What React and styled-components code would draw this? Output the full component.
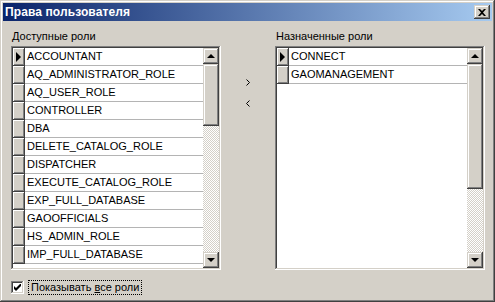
import React from "react";
import styled, { createGlobalStyle } from "styled-components";

const GlobalStyle = createGlobalStyle`
  html, body { margin: 0; padding: 0; background: #d4d0c8; }
  body { font-family: "Liberation Sans", Arial, sans-serif; font-size: 11px; color: #000; }
`;

const raised = `
  box-shadow: inset -1px -1px #404040, inset 1px 1px #d4d0c8,
    inset -2px -2px #808080, inset 2px 2px #ffffff;
`;
const sunken = `
  box-shadow: inset -1px -1px #ffffff, inset 1px 1px #808080,
    inset -2px -2px #d4d0c8, inset 2px 2px #404040;
`;

const Window = styled.div`
  box-sizing: border-box;
  width: 495px;
  height: 302px;
  padding: 3px;
  background: #d4d0c8;
  display: flex;
  flex-direction: column;
  box-shadow: inset -1px -1px #404040, inset 1px 1px #d4d0c8,
    inset -2px -2px #808080, inset 2px 2px #ffffff;
`;

const TitleBar = styled.div`
  height: 18px;
  display: flex;
  align-items: center;
  justify-content: space-between;
  padding: 0 2px;
  background: linear-gradient(to right, #0a246a, #a6caf0);
`;

const Title = styled.span`
  color: #fff;
  font-weight: bold;
  font-size: 12px;
  letter-spacing: 0.1px;
`;

const CloseButton = styled.div`
  box-sizing: border-box;
  width: 16px;
  height: 14px;
  background: #d4d0c8;
  display: flex;
  align-items: center;
  justify-content: center;
  ${raised}
`;

const Body = styled.div`
  flex: 1;
  display: flex;
  flex-direction: column;
  padding: 9px 7px 0 8px;
`;

const Columns = styled.div`
  display: grid;
  grid-template-columns: 210px 54px 210px;
`;

const Group = styled.div`
  display: flex;
  flex-direction: column;
`;

const Label = styled.div`
  line-height: 13px;
  margin-bottom: 3px;
  padding-left: 1px;
`;

const ListBox = styled.div`
  box-sizing: border-box;
  height: 224px;
  padding: 2px;
  background: #fff;
  display: flex;
  ${sunken}
`;

const Rows = styled.div`
  flex: 1;
  display: flex;
  flex-direction: column;
`;

const Row = styled.div`
  height: 18px;
  display: flex;
  flex-shrink: 0;
`;

const Indicator = styled.div`
  box-sizing: border-box;
  width: 12px;
  height: 18px;
  background: #d4d0c8;
  display: flex;
  align-items: center;
  padding-left: 3px;
  box-shadow: inset -1px -1px #404040, inset 1px 1px #ffffff,
    inset -2px -2px #808080;
  &::after {
    content: "";
    display: ${(p) => (p.$current ? "block" : "none")};
    width: 0;
    height: 0;
    border-top: 5px solid transparent;
    border-bottom: 5px solid transparent;
    border-left: 5px solid #000;
  }
`;

const Cell = styled.div`
  flex: 1;
  box-sizing: border-box;
  border-bottom: 1px solid #b4b4b4;
  padding-left: 2px;
  line-height: 17px;
  white-space: nowrap;
  overflow: hidden;
`;

const ScrollBar = styled.div`
  width: 16px;
  display: flex;
  flex-direction: column;
`;

const ScrollButton = styled.div`
  box-sizing: border-box;
  width: 16px;
  height: 16px;
  flex-shrink: 0;
  background: #d4d0c8;
  display: flex;
  align-items: center;
  justify-content: center;
  ${raised}
  &::after {
    content: "";
    width: 0;
    height: 0;
    border-left: 4px solid transparent;
    border-right: 4px solid transparent;
    ${(p) =>
      p.$down ? "border-top: 4px solid #000;" : "border-bottom: 4px solid #000;"}
  }
`;

const Thumb = styled.div`
  box-sizing: border-box;
  flex-shrink: 0;
  background: #d4d0c8;
  ${raised}
`;

const Track = styled.div`
  flex: 1;
  background: repeating-conic-gradient(#d4d0c8 0 25%, #ffffff 0 50%) 0 0 / 2px 2px;
`;

const Middle = styled.div`
  display: flex;
  flex-direction: column;
  align-items: center;
  padding-top: 42px;
  gap: 1px;
`;

const MoveButton = styled.div`
  width: 20px;
  height: 20px;
  display: flex;
  align-items: center;
  justify-content: center;
`;

const CheckRow = styled.div`
  display: flex;
  align-items: center;
  margin-top: 11px;
`;

const CheckBox = styled.div`
  box-sizing: border-box;
  width: 13px;
  height: 13px;
  background: #fff;
  display: flex;
  align-items: center;
  justify-content: center;
  ${sunken}
`;

const CheckLabel = styled.span`
  margin-left: 5px;
  padding: 0 2px 0 2px;
  line-height: 13px;
  outline: 1px dotted #000;
  outline-offset: 0;
`;

function List({ items, thumb }) {
  return (
    <ListBox>
      <Rows>
        {items.map((it, i) => (
          <Row key={it}>
            <Indicator $current={i === 0} />
            <Cell>{it}</Cell>
          </Row>
        ))}
      </Rows>
      <ScrollBar>
        <ScrollButton />
        <Thumb style={{ height: thumb }} />
        <Track />
        <ScrollButton $down />
      </ScrollBar>
    </ListBox>
  );
}

const available = [
  "ACCOUNTANT",
  "AQ_ADMINISTRATOR_ROLE",
  "AQ_USER_ROLE",
  "CONTROLLER",
  "DBA",
  "DELETE_CATALOG_ROLE",
  "DISPATCHER",
  "EXECUTE_CATALOG_ROLE",
  "EXP_FULL_DATABASE",
  "GAOOFFICIALS",
  "HS_ADMIN_ROLE",
  "IMP_FULL_DATABASE",
];
const assigned = ["CONNECT", "GAOMANAGEMENT"];

export default function App() {
  return (
    <>
      <GlobalStyle />
      <Window>
        <TitleBar>
          <Title>Права пользователя</Title>
          <CloseButton>
            <svg width="8" height="7" viewBox="0 0 8 7">
              <path d="M0 0h2l2 2 2-2h2L5 3.5 8 7H6L4 5 2 7H0l3-3.5z" fill="#000" />
            </svg>
          </CloseButton>
        </TitleBar>
        <Body>
          <Columns>
            <Group>
              <Label>Доступные роли</Label>
              <List items={available} thumb={62} />
            </Group>
            <Middle>
              <MoveButton>
                <svg width="4" height="7" viewBox="0 0 4 7">
                  <path d="M0.5 0.5 L3.5 3.5 L0.5 6.5" stroke="#000" fill="none" />
                </svg>
              </MoveButton>
              <MoveButton>
                <svg width="4" height="7" viewBox="0 0 4 7">
                  <path d="M3.5 0.5 L0.5 3.5 L3.5 6.5" stroke="#000" fill="none" />
                </svg>
              </MoveButton>
            </Middle>
            <Group>
              <Label>Назначенные роли</Label>
              <List items={assigned} thumb={125} />
            </Group>
          </Columns>
          <CheckRow>
            <CheckBox>
              <svg width="7" height="7" viewBox="0 0 7 7">
                <path d="M0 2v3l2 2 5-5V-1L2 4z" fill="#000" />
              </svg>
            </CheckBox>
            <CheckLabel>
              Показывать <u>в</u>се роли
            </CheckLabel>
          </CheckRow>
        </Body>
      </Window>
    </>
  );
}
